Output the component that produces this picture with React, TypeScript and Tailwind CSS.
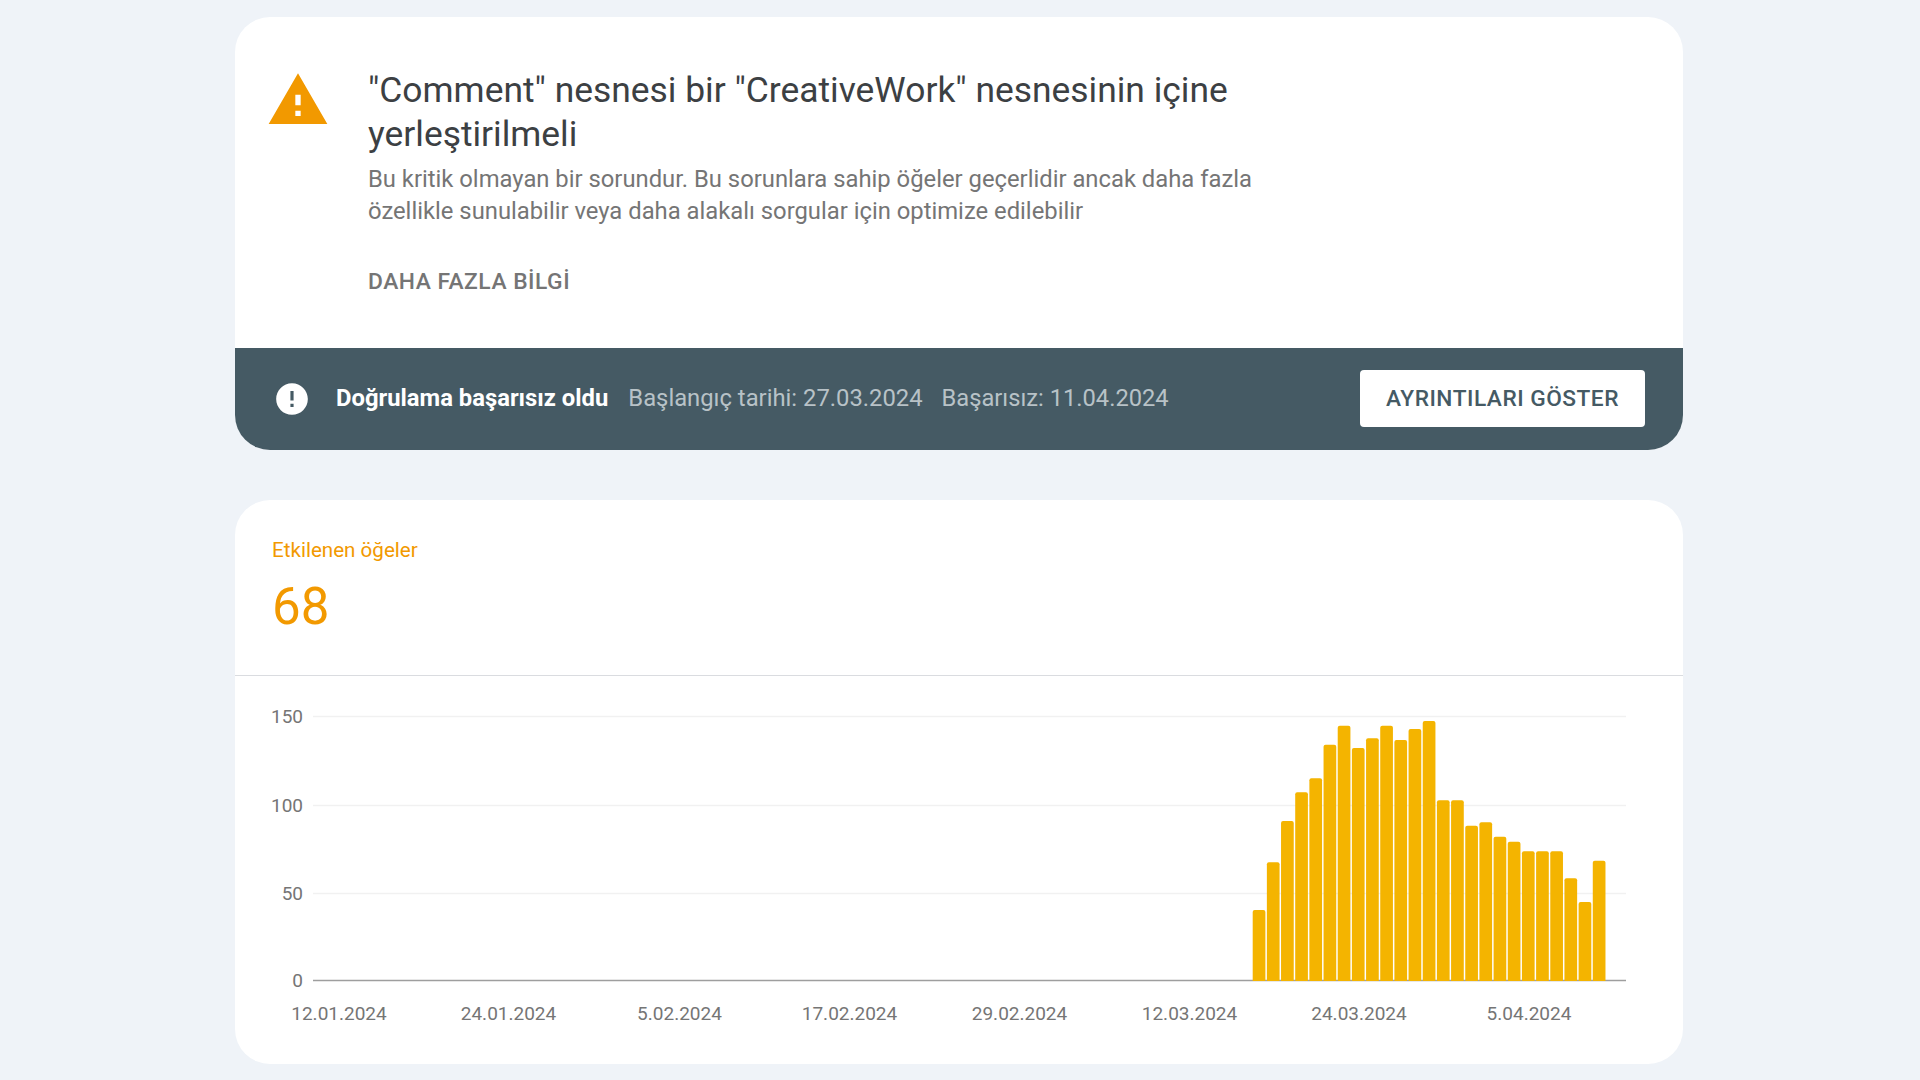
const yTicks = [
  { label: '150', y: 716.5 },
  { label: '100', y: 805.5 },
  { label: '50', y: 893.5 },
];

const xLabels = [
  { label: '12.01.2024', x: 339 },
  { label: '24.01.2024', x: 508.5 },
  { label: '5.02.2024', x: 679.5 },
  { label: '17.02.2024', x: 849.5 },
  { label: '29.02.2024', x: 1019.5 },
  { label: '12.03.2024', x: 1189.5 },
  { label: '24.03.2024', x: 1359 },
  { label: '5.04.2024', x: 1529 },
];

// bar tops as measured on the page, in px
const barTops = [910, 862.3, 821, 792.3, 778.3, 744.7, 725.7, 748, 738.3, 725.7, 740, 729, 721, 800.3, 800.3, 825.7, 822.3, 836.7, 841.7, 851.3, 851.3, 851.3, 878.3, 902, 860.7];
const baseline = 981;

function Chart() {
  return (
    <svg viewBox="235 676 1448 387.5" className="block w-full h-[387.5px]">
      {yTicks.map((t) => (
        <g key={t.label}>
          <line x1="313" x2="1626" y1={t.y} y2={t.y} stroke="#f1f1f1" strokeWidth="1.5" />
          <text x="303" y={t.y + 6.5} textAnchor="end" fontSize="19" fill="#757575" fontFamily="Roboto, sans-serif">
            {t.label}
          </text>
        </g>
      ))}
      <text x="303" y={baseline + 6} textAnchor="end" fontSize="19" fill="#757575" fontFamily="Roboto, sans-serif">
        0
      </text>
      <line x1="313" x2="1626" y1={baseline - 0.5} y2={baseline - 0.5} stroke="#9e9e9e" strokeWidth="1.5" />
      {barTops.map((top, i) => {
        const x = 1252.7 + i * 14.17;
        const h = baseline - top;
        return (
          <path
            key={i}
            d={`M${x} ${baseline}v${-(h - 2)}q0 -2 2 -2h8.7q2 0 2 2v${h - 2}z`}
            fill="#f4b400"
          />
        );
      })}
      {xLabels.map((l) => (
        <text key={l.label} x={l.x} y="1019.5" textAnchor="middle" fontSize="19" fill="#757575" fontFamily="Roboto, sans-serif">
          {l.label}
        </text>
      ))}
    </svg>
  );
}

export default function App() {
  return (
    <div className="min-h-screen bg-[#eff3f8] pt-[17px] font-['Roboto',sans-serif]">
      <div className="ml-[235px] w-[1448px] flex flex-col gap-[50.5px]">
        {/* Issue card */}
        <div className="rounded-[35px] bg-white overflow-hidden">
          <div className="h-[330.5px] flex items-start pl-[31px] pt-[51px]">
            <svg viewBox="0 0 24 24" className="w-16 h-16 shrink-0" fill="#f29900">
              <path d="M1 21h22L12 2 1 21zm12-3h-2v-2h2v2zm0-4h-2v-4h2v4z" />
            </svg>
            <div className="ml-[38px] w-[900px]">
              <h1 className="text-[35.4px] leading-[44px] text-[#3c4043]">
                "Comment" nesnesi bir "CreativeWork" nesnesinin içine yerleştirilmeli
              </h1>
              <p className="mt-[7px] text-[23.8px] leading-[32px] text-[#757575]">
                Bu kritik olmayan bir sorundur. Bu sorunlara sahip öğeler geçerlidir ancak daha fazla özellikle sunulabilir veya daha alakalı sorgular için optimize edilebilir
              </p>
              <div className="mt-[39px] text-[22.8px] leading-[32px] font-medium tracking-[0.5px] text-[#757575]">
                DAHA FAZLA BİLGİ
              </div>
            </div>
          </div>
          <div className="h-[102px] bg-[#455a64] flex items-center pl-[38px] pr-[38px]">
            <svg viewBox="0 0 24 24" className="w-[38px] h-[38px] shrink-0" fill="#ffffff">
              <path d="M12 2C6.48 2 2 6.48 2 12s4.48 10 10 10 10-4.48 10-10S17.52 2 12 2zm1 15h-2v-2h2v2zm0-4h-2V7h2v6z" />
            </svg>
            <span className="ml-[25px] text-[23.8px] font-bold text-white">Doğrulama başarısız oldu</span>
            <span className="ml-5 text-[23.8px] text-[#b8c2c7]">Başlangıç tarihi: 27.03.2024</span>
            <span className="ml-[19px] text-[23.7px] text-[#b8c2c7]">Başarısız: 11.04.2024</span>
            <button className="ml-auto w-[285px] h-[57px] pt-px rounded bg-white text-[22.7px] font-medium tracking-[0.5px] text-[#455a64]">
              AYRINTILARI GÖSTER
            </button>
          </div>
        </div>

        {/* Affected items card */}
        <div className="rounded-[35px] bg-white overflow-hidden">
          <div className="h-[176px] border-b border-[#dadce0] pl-[37px] pt-[36px]">
            <div className="text-[20.6px] leading-[28px] text-[#f29900]">Etkilenen öğeler</div>
            <div className="mt-[15px] text-[51px] leading-[56px] text-[#f29900]">68</div>
          </div>
          <Chart />
        </div>
      </div>
    </div>
  );
}
